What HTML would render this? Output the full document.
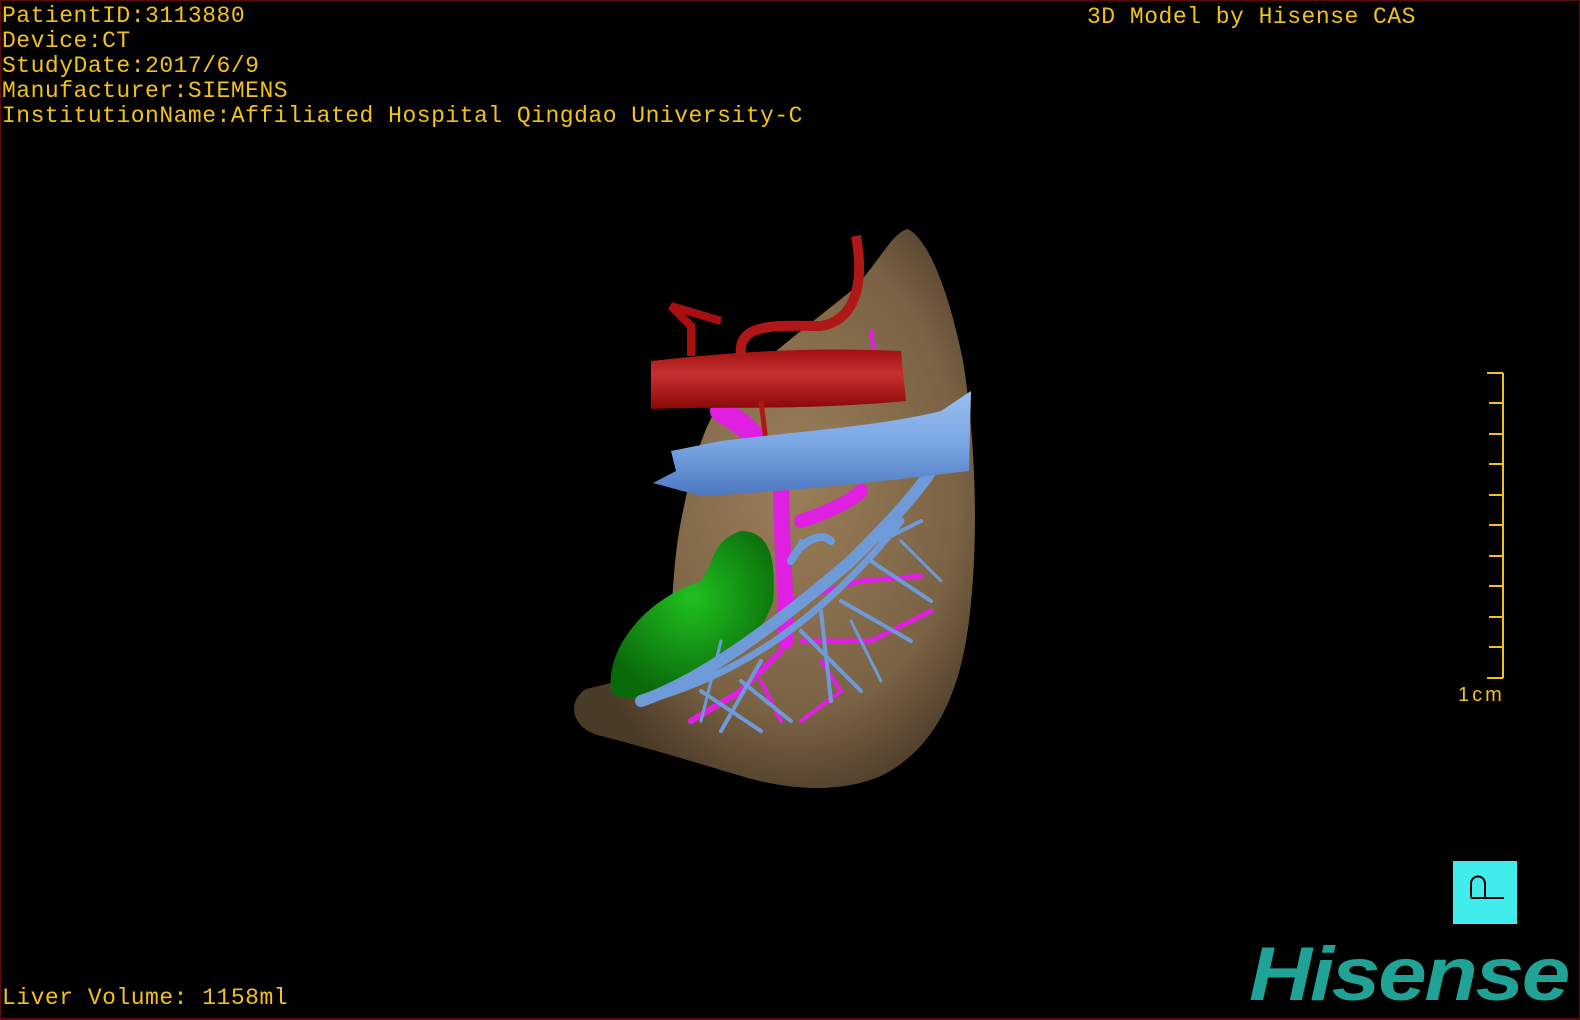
<!DOCTYPE html>
<html><head><meta charset="utf-8"><style>
html,body{margin:0;padding:0;background:#000;}
#w{position:relative;width:1580px;height:1020px;background:#000;overflow:hidden;box-sizing:border-box;border:1px solid #5a0a0a;border-width:1px 1px 2px 1px;}
.t{position:absolute;color:#f2c21a;font-family:"Liberation Mono",monospace;font-size:23px;letter-spacing:0.5px;white-space:pre;line-height:25px;}
.hs{position:absolute;left:1248px;top:930px;font-family:"Liberation Sans",sans-serif;font-weight:bold;font-style:italic;font-size:76px;color:#1fa396;letter-spacing:-2px;transform:scaleX(1.15);transform-origin:left;}
</style></head><body><div id="w">
<div class="t" style="left:1px;top:3px">PatientID:3113880
Device:CT
StudyDate:2017/6/9
Manufacturer:SIEMENS
InstitutionName:Affiliated Hospital Qingdao University-C</div>
<div class="t" style="left:1086px;top:4px">3D Model by Hisense CAS</div>
<div class="t" style="left:1px;top:985px">Liver Volume: 1158ml</div>
<div class="t" style="left:1457px;top:682px;font-family:'Liberation Sans',sans-serif;font-size:20px;letter-spacing:3px">1cm</div>
<svg width="1580" height="1020" style="position:absolute;left:0;top:0">
<defs>
<radialGradient id="lv" cx="0.55" cy="0.45" r="0.6"><stop offset="0" stop-color="#9b7f5a"/><stop offset="0.7" stop-color="#7a6244"/><stop offset="1" stop-color="#4a3a28"/></radialGradient>
<linearGradient id="rd" x1="0" y1="0" x2="0" y2="1"><stop offset="0" stop-color="#a01010"/><stop offset="0.4" stop-color="#c83030"/><stop offset="1" stop-color="#8a0808"/></linearGradient>
<linearGradient id="bl" x1="0" y1="0" x2="0" y2="1"><stop offset="0" stop-color="#9ac0f0"/><stop offset="0.5" stop-color="#7aa6e4"/><stop offset="1" stop-color="#4d78c0"/></linearGradient>
<radialGradient id="gr" cx="0.5" cy="0.4" r="0.6"><stop offset="0" stop-color="#20c020"/><stop offset="1" stop-color="#0a6a0a"/></radialGradient>
</defs>
<path d="M907,228 C930,240 950,300 962,360 C975,440 978,540 968,620 C958,700 930,750 880,775 C840,792 790,790 740,775 C690,760 640,745 600,735 C570,728 565,700 585,688 C620,680 660,670 668,640 C672,600 672,560 680,520 C690,470 700,430 720,400 C760,360 800,330 850,290 C880,260 890,232 907,228Z" fill="url(#lv)"/>
<path d="M610,690 C605,650 640,600 700,580 C715,560 710,540 740,530 C770,530 775,560 772,600 C760,640 720,670 670,690 C640,700 615,700 610,690Z" fill="url(#gr)"/>
<g stroke="#e020e0" fill="none" stroke-linecap="round">
<path d="M780,480 C780,540 785,580 785,640" stroke-width="16"/>
<path d="M720,410 C735,420 760,430 770,470" stroke-width="22"/>
<path d="M800,520 C830,510 850,500 860,490" stroke-width="14"/>
<path d="M790,600 L860,580 L920,575" stroke-width="5"/>
<path d="M800,640 L870,640 L930,610" stroke-width="5"/>
<path d="M780,650 L740,690 L690,720" stroke-width="6"/>
<path d="M820,660 L840,690 L800,720" stroke-width="4"/>
<path d="M870,330 L880,400" stroke-width="4"/>
<path d="M760,680 L780,720" stroke-width="4"/>
</g>
<g stroke="#6f9ad8" fill="none" stroke-linecap="round">
<path d="M640,700 C700,680 780,620 850,560 C880,530 910,500 930,470" stroke-width="12"/>
<path d="M660,695 C740,670 820,620 900,520" stroke-width="7"/>
<path d="M700,690 L760,730 M740,680 L790,720 M800,630 L860,690 M840,600 L910,640 M870,560 L930,600 M880,540 L920,520 M760,660 L720,730 M820,610 L830,700 M790,560 L800,540" stroke-width="4"/>
<path d="M790,560 C800,540 820,530 830,540" stroke-width="8"/>
<path d="M720,640 L700,720 M850,620 L880,680 M900,540 L940,580" stroke-width="3"/>
</g>
<path d="M650,360 C700,355 780,345 900,350 L905,400 C800,410 720,405 650,408 Z" fill="url(#rd)"/>
<path d="M740,355 C735,320 780,325 820,325 C850,320 865,290 855,235" stroke="#b01818" stroke-width="10" fill="none"/>
<path d="M690,355 L690,325 L670,305 L720,320" stroke="#a81010" stroke-width="8" fill="none"/>
<path d="M760,400 L765,440" stroke="#b01818" stroke-width="5"/>
<path d="M652,482 L675,470 L670,450 L720,440 C800,430 880,425 940,410 L970,390 L968,470 C900,478 800,490 700,495 Z" fill="url(#bl)"/>
<g stroke="#f2c21a" stroke-width="2" fill="none">
<path d="M1502,372 V677 M1486,372 H1502 M1486,677 H1502"/>
<path d="M1488,402H1502M1488,433H1502M1488,463H1502M1488,494H1502M1488,524H1502M1488,555H1502M1488,585H1502M1488,616H1502M1488,646H1502"/>
</g>
<rect x="1452" y="860" width="64" height="63" fill="#40ecec"/>
<path d="M1470,897 V883 C1470,873 1484,873 1484,883 V897 H1503 M1470,897 H1484" stroke="#000" stroke-width="2" fill="none"/>
</svg>
<div class="hs">Hisense</div>
</div></body></html>
